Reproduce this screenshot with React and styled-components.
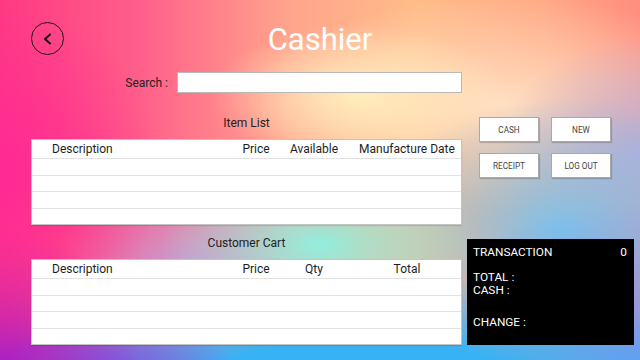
import React from "react";
import styled, { createGlobalStyle } from "styled-components";

const GlobalStyle = createGlobalStyle`
  html, body { margin: 0; padding: 0; }
  body { font-family: Roboto, "Noto Sans", sans-serif; }
  * { box-sizing: border-box; }
`;

const Page = styled.div`
  width: 640px;
  height: 360px;
  overflow: hidden;
  display: flex;
  flex-direction: column;
  font-family: Roboto, sans-serif;
  color: #222;
  background:
    radial-gradient(ellipse 150px 70px at 360px 95px, rgba(255, 240, 190, 0.95), rgba(255, 240, 190, 0)),
    radial-gradient(ellipse 160px 80px at 320px 245px, rgba(145, 238, 222, 1), rgba(145, 238, 222, 0)),
    radial-gradient(ellipse 170px 180px at -10px 175px, rgba(255, 40, 150, 1), rgba(255, 40, 150, 0)),
    radial-gradient(ellipse 140px 150px at 0px 375px, rgba(165, 30, 200, 1), rgba(165, 30, 200, 0)),
    radial-gradient(ellipse 130px 70px at 110px 380px, rgba(115, 80, 232, 1), rgba(115, 80, 232, 0)),
    radial-gradient(ellipse 380px 120px at 360px 395px, rgba(55, 178, 245, 1) 0%, rgba(55, 178, 245, 1) 45%, rgba(55, 178, 245, 0) 100%),
    radial-gradient(ellipse 260px 170px at 650px 370px, rgba(110, 150, 250, 1), rgba(110, 150, 250, 0)),
    radial-gradient(ellipse 200px 130px at 560px 230px, rgba(125, 195, 235, 1), rgba(125, 195, 235, 0)),
    radial-gradient(ellipse 140px 90px at 190px 270px, rgba(190, 160, 220, 0.9), rgba(190, 160, 220, 0)),
    radial-gradient(ellipse 150px 120px at 650px 155px, rgba(180, 172, 218, 1), rgba(180, 172, 218, 0)),
    radial-gradient(ellipse 250px 110px at 500px 105px, rgba(255, 222, 195, 1), rgba(255, 222, 195, 0)),
    linear-gradient(90deg, #ff3a82 0%, #ff5f8a 22%, #ffa48c 45%, #ffbc88 65%, #ffa884 85%, #ff8e80 100%);
`;

const Header = styled.header`
  display: grid;
  grid-template-columns: 1fr auto 1fr;
  align-items: start;
  padding: 22px 31px 0 31px;
`;

const BackButton = styled.button`
  width: 33px;
  height: 33px;
  padding: 0;
  border: 1px solid #161616;
  border-radius: 50%;
  background: transparent;
  display: flex;
  align-items: center;
  justify-content: center;
  justify-self: start;
  cursor: pointer;
`;

const Title = styled.h1`
  margin: 0;
  font-family: Roboto, sans-serif;
  font-weight: 400;
  font-size: 31px;
  line-height: 36px;
  color: #ffffff;
`;

const Body = styled.div`
  display: flex;
  flex-direction: column;
  padding: 0 6px 0 31px;
`;

const SearchRow = styled.div`
  width: 431px;
  display: flex;
  align-items: center;
  justify-content: flex-end;
  gap: 9px;
  margin-top: 14px;
`;

const SearchLabel = styled.label`
  font-size: 12px;
  line-height: 14px;
  color: #222;
`;

const SearchInput = styled.input`
  width: 285px;
  height: 21px;
  border: 1px solid #b9b9b9;
  background: #fff;
  outline: none;
  padding: 0 4px;
`;

const Main = styled.div`
  display: grid;
  grid-template-columns: 431px 167px;
  column-gap: 5px;
  height: 230px;
  margin-top: 22px;
`;

const LeftColumn = styled.div`
  display: flex;
  flex-direction: column;
`;

const Section = styled.section`
  display: flex;
  flex-direction: column;
  gap: 8px;
  margin-top: ${(p) => p.$offset || 0}px;
`;

const SectionLabel = styled.div`
  text-align: center;
  font-size: 12px;
  line-height: 16px;
  color: #222;
`;

const Table = styled.div`
  height: 86px;
  display: flex;
  flex-direction: column;
  background: #fff;
  border: 1px solid #c4c4c4;
  box-shadow: 0 1px 1px rgba(0, 0, 0, 0.12);
`;

const HeaderRow = styled.div`
  display: grid;
  grid-template-columns: 197px 54px 62px 1fr;
  height: 19px;
  border-bottom: 1px solid #e2e2e2;
  font-size: 12px;
  line-height: 18px;
  color: #1e1e1e;
`;

const HeadCell = styled.div`
  text-align: ${(p) => p.$align || "center"};
  padding-left: ${(p) => p.$pad || 0}px;
  white-space: nowrap;
`;

const Row = styled.div`
  flex: 1;
  border-bottom: ${(p) => (p.$last ? "none" : "1px solid #e2e2e2")};
`;

const RightColumn = styled.div`
  display: flex;
  flex-direction: column;
`;

const ButtonGrid = styled.div`
  display: grid;
  grid-template-columns: 60px 60px;
  column-gap: 12px;
  row-gap: 11px;
  padding: 2px 0 0 12px;
`;

const ActionButton = styled.button`
  height: 25px;
  background: #fff;
  border: 1px solid #a9a9a9;
  box-shadow: 1px 1px 1px rgba(0, 0, 0, 0.18);
  font-family: Roboto, sans-serif;
  font-size: 8.2px;
  color: #444;
  padding: 0;
  cursor: pointer;
`;

const Summary = styled.div`
  margin-top: auto;
  height: 106px;
  background: #000;
  color: #fff;
  padding: 6px 7px 0 6px;
  font-size: 11.8px;
  display: flex;
  flex-direction: column;
`;

const SummaryHead = styled.div`
  display: flex;
  justify-content: space-between;
  line-height: 14px;
`;

const SummaryLine = styled.div`
  line-height: 13px;
  margin-top: ${(p) => p.$gap || 0}px;
`;

function DataTable({ columns }) {
  return (
    <Table>
      <HeaderRow>
        <HeadCell $align="left" $pad={20}>{columns[0]}</HeadCell>
        <HeadCell>{columns[1]}</HeadCell>
        <HeadCell>{columns[2]}</HeadCell>
        <HeadCell $pad={8}>{columns[3]}</HeadCell>
      </HeaderRow>
      <Row />
      <Row />
      <Row />
      <Row $last />
    </Table>
  );
}

export default function App() {
  return (
    <>
      <GlobalStyle />
      <Page>
        <Header>
          <BackButton aria-label="Back">
            <svg width="12" height="14" viewBox="0 0 12 14">
              <path d="M8.6 2 L3 7 L8.6 12" fill="none" stroke="#111" strokeWidth="2" />
            </svg>
          </BackButton>
          <Title>Cashier</Title>
          <span />
        </Header>
        <Body>
          <SearchRow>
            <SearchLabel>Search :</SearchLabel>
            <SearchInput />
          </SearchRow>
          <Main>
            <LeftColumn>
              <Section>
                <SectionLabel>Item List</SectionLabel>
                <DataTable columns={["Description", "Price", "Available", "Manufacture Date"]} />
              </Section>
              <Section $offset={10}>
                <SectionLabel>Customer Cart</SectionLabel>
                <DataTable columns={["Description", "Price", "Qty", "Total"]} />
              </Section>
            </LeftColumn>
            <RightColumn>
              <ButtonGrid>
                <ActionButton>CASH</ActionButton>
                <ActionButton>NEW</ActionButton>
                <ActionButton>RECEIPT</ActionButton>
                <ActionButton>LOG OUT</ActionButton>
              </ButtonGrid>
              <Summary>
                <SummaryHead>
                  <span>TRANSACTION</span>
                  <span>0</span>
                </SummaryHead>
                <SummaryLine $gap={12}>TOTAL :</SummaryLine>
                <SummaryLine>CASH :</SummaryLine>
                <SummaryLine $gap={18.5}>CHANGE :</SummaryLine>
              </Summary>
            </RightColumn>
          </Main>
        </Body>
      </Page>
    </>
  );
}
